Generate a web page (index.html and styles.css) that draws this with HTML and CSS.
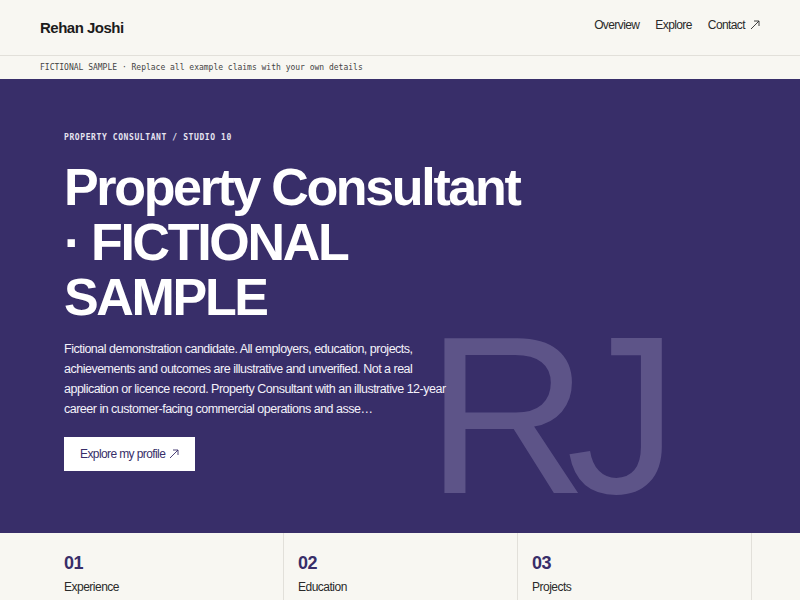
FILE: index.html
```html
<!DOCTYPE html>
<html lang="en">
<head>
<meta charset="utf-8">
<title>Rehan Joshi</title>
<link rel="stylesheet" href="styles.css">
</head>
<body>
<header class="site-header">
  <div class="brand">Rehan Joshi</div>
  <nav class="nav">
    <a href="#">Overview</a>
    <a href="#">Explore</a>
    <a href="#" class="ext">Contact <svg class="arrow" viewBox="0 0 10 10" width="10" height="10"><path d="M1 9 L9 1 M4 1 H9 V6" fill="none" stroke="currentColor" stroke-width="0.9"/></svg></a>
  </nav>
</header>
<div class="notice">FICTIONAL SAMPLE · Replace all example claims with your own details</div>
<section class="hero">
  <div class="hero-inner">
    <div class="eyebrow">PROPERTY CONSULTANT / STUDIO 10</div>
    <h1 class="title">Property Consultant · FICTIONAL SAMPLE</h1>
    <p class="lead">Fictional demonstration candidate. All employers, education, projects, achievements and outcomes are illustrative and unverified. Not a real application or licence record. Property Consultant with an illustrative 12-year career in customer-facing commercial operations and asse…</p>
    <a class="btn" href="#">Explore my profile <svg class="arrow" viewBox="0 0 10 10" width="10" height="10"><path d="M1 9 L9 1 M4 1 H9 V6" fill="none" stroke="currentColor" stroke-width="0.9"/></svg></a>
  </div>
  <div class="monogram" aria-hidden="true">RJ</div>
</section>
<section class="cards">
  <div class="card"><div class="num">01</div><div class="label">Experience</div></div>
  <div class="card"><div class="num">02</div><div class="label">Education</div></div>
  <div class="card"><div class="num">03</div><div class="label">Projects</div></div>
</section>
</body>
</html>
```
FILE: styles.css
```css
* { box-sizing: border-box; }
html, body { margin: 0; padding: 0; }
body {
  background: #f8f7f2;
  font-family: "Liberation Sans", Arial, sans-serif;
  color: #222;
  overflow: hidden;
}
a { color: inherit; text-decoration: none; }

.site-header {
  height: 56px;
  display: flex;
  align-items: center;
  justify-content: space-between;
  padding: 0 40px;
  border-bottom: 1px solid #e2e0da;
}
.brand {
  font-size: 15px;
  font-weight: 700;
  letter-spacing: -0.5px;
  color: #1c1c1c;
}
.nav {
  display: flex;
  gap: 16px;
  font-size: 12px;
  letter-spacing: -0.6px;
  color: #2a2a2a;
  margin-top: -6px;
}
.ext { display: inline-flex; align-items: center; gap: 5px; }
.arrow { display: inline-block; }

.notice {
  height: 23px;
  display: flex;
  align-items: center;
  padding: 0 40px;
  font-family: "DejaVu Sans Mono", "Liberation Mono", monospace;
  font-size: 8px;
  color: #444;
}

.hero {
  position: relative;
  background: #382e69;
  height: 454px;
  overflow: hidden;
  color: #fff;
}
.hero-inner {
  position: relative;
  z-index: 1;
  padding: 54px 64px 0;
}
.eyebrow {
  font-family: "DejaVu Sans Mono", "Liberation Mono", monospace;
  font-size: 8px;
  font-weight: 700;
  letter-spacing: 0.6px;
  color: #e6e3f0;
}
.title {
  margin: 18px 0 0;
  max-width: 480px;
  font-size: 52px;
  line-height: 55px;
  font-weight: 700;
  letter-spacing: -0.045em;
}
.lead {
  margin: 14px 0 0;
  max-width: 392px;
  font-size: 12.5px;
  letter-spacing: -0.5px;
  line-height: 20px;
  color: #f4f2fa;
}
.btn {
  display: inline-flex;
  align-items: center;
  gap: 4px;
  margin-top: 18px;
  background: #fff;
  color: #382e69;
  font-size: 12px;
  letter-spacing: -0.6px;
  padding: 10px 16px;
  line-height: 14px;
}
.monogram {
  position: absolute;
  left: 426px;
  top: 224px;
  font-size: 225px;
  line-height: 1;
  letter-spacing: -0.1em;
  color: #5d5488;
  z-index: 0;
}

.cards {
  display: grid;
  grid-template-columns: repeat(3, 234px);
  margin-left: 50px;
}
.card {
  border-right: 1px solid #e2e0da;
  padding: 20px 14px 0;
  height: 70px;
}
.num {
  font-size: 18px;
  font-weight: 700;
  letter-spacing: -0.6px;
  color: #382e69;
}
.label {
  margin-top: 6px;
  font-size: 12px;
  letter-spacing: -0.5px;
  color: #2a2a2a;
}
```
